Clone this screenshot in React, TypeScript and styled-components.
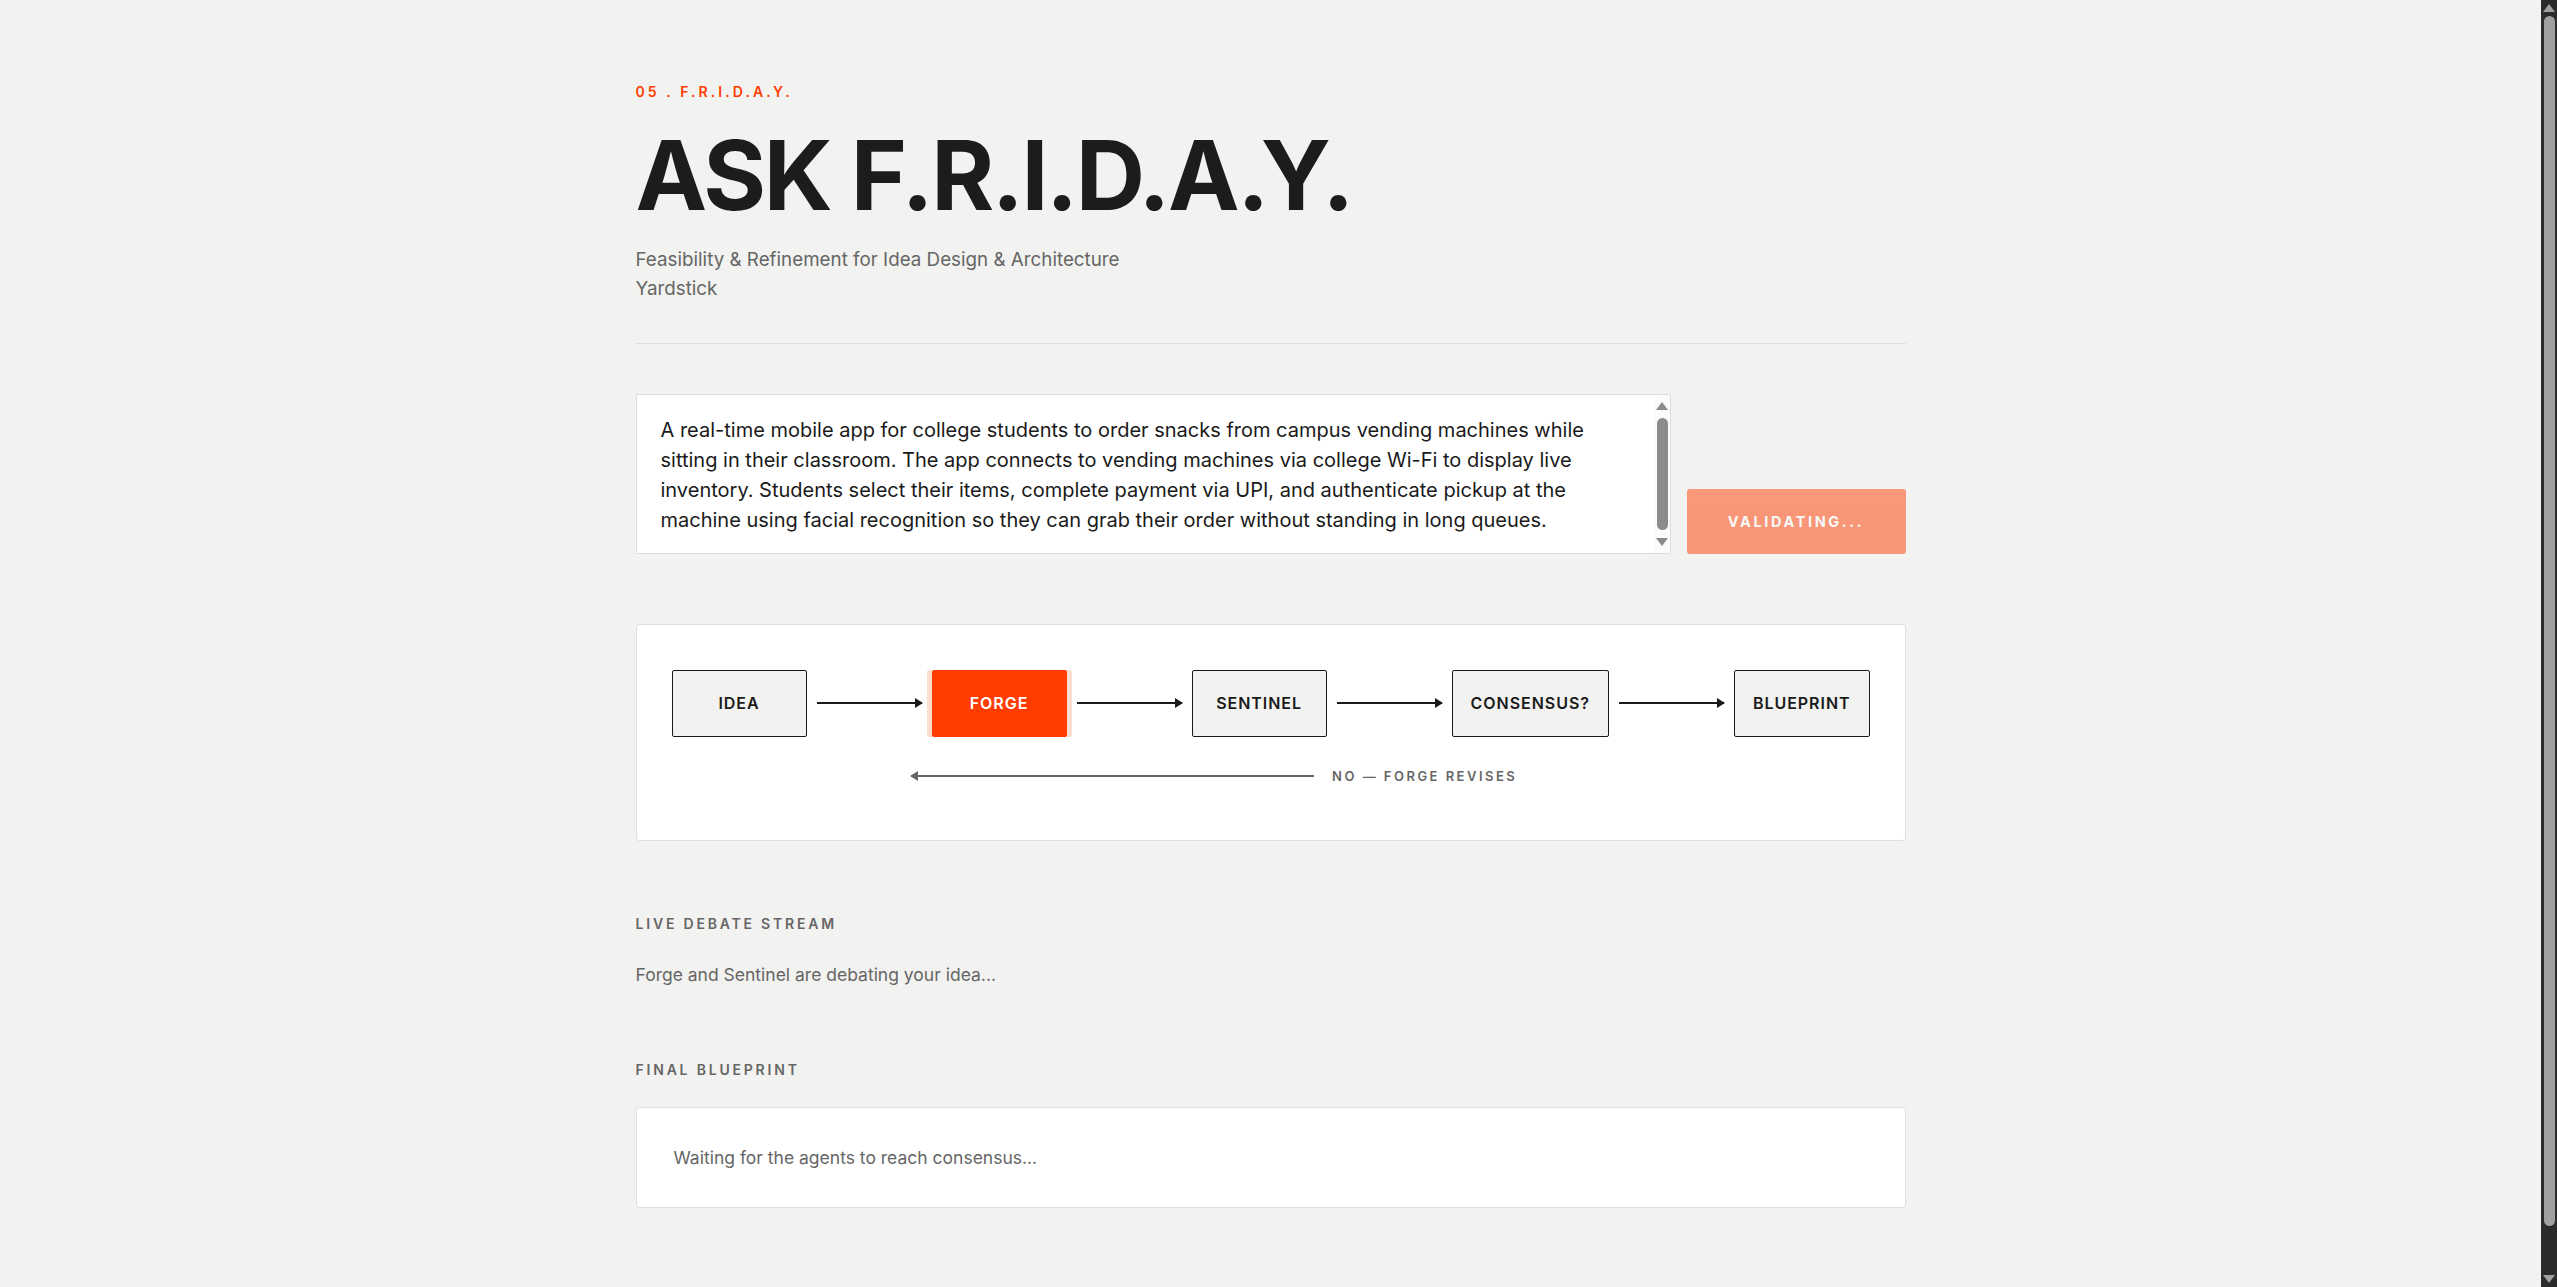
import React from 'react'
import styled, { createGlobalStyle } from 'styled-components'

const GlobalStyle = createGlobalStyle`
    html, body {
        margin: 0;
        padding: 0;
        background: #f2f2f0;
    }

    body {
        padding-right: 16px;
        font-family: Inter, "Noto Sans", "Liberation Sans", sans-serif;
        color: #1a1a1a;
        -webkit-font-smoothing: antialiased;
    }

    * {
        box-sizing: border-box;
    }
`

const Page = styled.main`
    max-width: 1270px;
    margin: 0 auto;
    padding: 83px 0 127px;
`

const Header = styled.header`
    padding-bottom: 39px;
    border-bottom: 1px solid #dddddb;
`

const Eyebrow = styled.div`
    font-size: 14px;
    font-weight: 600;
    line-height: 17px;
    letter-spacing: 0.22em;
    color: #ff3d00;
    margin-bottom: 27px;
`

const Title = styled.h1`
    margin: 0 0 23px;
    font-size: 96px;
    font-weight: 700;
    line-height: 1;
    letter-spacing: -0.025em;
    color: #1c1c1c;
`

const Subtitle = styled.p`
    margin: 0;
    max-width: 540px;
    font-size: 18.8px;
    line-height: 28.8px;
    color: #666;
`

const InputRow = styled.div`
    display: flex;
    align-items: flex-end;
    gap: 16px;
    margin-top: 50px;
`

const InputBox = styled.div`
    flex: 1;
    display: flex;
    position: relative;
`

const IdeaInput = styled.textarea`
    flex: 1;
    height: 160px;
    padding: 20px 39px 44px 24px;
    border: 1px solid #dddddb;
    border-radius: 2px;
    background: #fff;
    font-family: inherit;
    font-size: 20px;
    line-height: 30px;
    color: #1a1a1a;
    resize: none;
    outline: none;
    overflow: hidden;
`

// scrollbars are drawn by hand, the browser hides its own in the screenshot
const TextScrollbar = styled.div`
    position: absolute;
    top: 1px;
    right: 1px;
    bottom: 1px;
    width: 15px;
    display: flex;
    flex-direction: column;
    align-items: center;
    gap: 8px;
    padding: 7px 0;
    background: #fbfbfb;
`

const PageScrollbar = styled.div`
    position: fixed;
    top: 0;
    right: 0;
    bottom: 0;
    width: 16px;
    display: flex;
    flex-direction: column;
    align-items: center;
    gap: 4px;
    padding: 4px 0;
    background: #2b2b2b;
`

interface ThumbProps {
    $color: string
    $length?: number
}

const ScrollThumb = styled.div<ThumbProps>`
    width: 11px;
    border-radius: 6px;
    background: ${ props => props.$color };
    ${ props => props.$length ? `height: ${ props.$length }px;` : 'flex: 1;' }
`

interface ArrowHeadProps {
    $down?: boolean
    $color: string
}

const ScrollArrow = styled.div<ArrowHeadProps>`
    width: 0;
    height: 0;
    flex-shrink: 0;
    border-left: 6px solid transparent;
    border-right: 6px solid transparent;
    ${ props => props.$down
        ? `border-top: 8px solid ${ props.$color }; margin-top: auto;`
        : `border-bottom: 8px solid ${ props.$color };` }
`

const SubmitButton = styled.button`
    width: 219px;
    height: 65px;
    border: none;
    border-radius: 3px;
    background: #ff3d00;
    opacity: 0.5;
    color: #fff;
    font-family: inherit;
    font-size: 14.5px;
    font-weight: 700;
    letter-spacing: 0.18em;
    cursor: not-allowed;
`

const FlowCard = styled.section`
    margin-top: 70px;
    padding: 45px 35px 56px;
    background: #fff;
    border: 1px solid #e0e0de;
    border-radius: 3px;
`

const FlowRow = styled.div`
    display: flex;
    align-items: center;
    gap: 10px;
`

interface NodeProps {
    $active?: boolean
}

const Node = styled.div<NodeProps>`
    display: flex;
    align-items: center;
    justify-content: center;
    height: 67px;
    min-width: 135px;
    padding: 0 18px;
    border: 1px solid ${ props => props.$active ? '#ff3d00' : '#1a1a1a' };
    border-radius: 2px;
    background: ${ props => props.$active ? '#ff3d00' : '#f2f2f0' };
    color: ${ props => props.$active ? '#fff' : '#1a1a1a' };
    box-shadow: ${ props => props.$active ? '-5px 0 0 #ffdcd0, 5px 0 0 #ffdcd0' : 'none' };
    font-size: 16px;
    font-weight: 600;
    letter-spacing: 0.06em;
`

const Arrow = styled.div`
    flex: 1;
    height: 2px;
    background: #1a1a1a;
    position: relative;

    &::after {
        content: '';
        position: absolute;
        right: -1px;
        top: -4px;
        border-left: 8px solid #1a1a1a;
        border-top: 5px solid transparent;
        border-bottom: 5px solid transparent;
    }
`

const ReturnRow = styled.div`
    display: flex;
    align-items: center;
    gap: 18px;
    margin: 31px 0 0 20%;
`

const ReturnArrow = styled.div`
    width: 403px;
    height: 2px;
    background: #666;
    position: relative;

    &::before {
        content: '';
        position: absolute;
        left: -1px;
        top: -4px;
        border-right: 8px solid #666;
        border-top: 5px solid transparent;
        border-bottom: 5px solid transparent;
    }
`

const ReturnLabel = styled.span`
    font-size: 13px;
    font-weight: 600;
    line-height: 16px;
    letter-spacing: 0.19em;
    color: #666;
`

interface SectionProps {
    $gap: number
}

const Section = styled.section<SectionProps>`
    margin-top: ${ props => props.$gap }px;
`

const SectionLabel = styled.h2`
    margin: 0 0 29px;
    font-size: 14px;
    font-weight: 600;
    line-height: 17px;
    letter-spacing: 0.2em;
    color: #666;
`

const StreamText = styled.p`
    margin: 0;
    font-size: 17.5px;
    line-height: 27px;
    color: #666;
`

const BlueprintCard = styled.div`
    padding: 36px 37px;
    background: #fff;
    border: 1px solid #e0e0de;
    border-radius: 3px;
    font-size: 17.5px;
    line-height: 27px;
    color: #666;
`

const idea = 'A real-time mobile app for college students to order snacks from campus vending machines while sitting in their classroom. The app connects to vending machines via college Wi-Fi to display live inventory. Students select their items, complete payment via UPI, and authenticate pickup at the machine using facial recognition so they can grab their order without standing in long queues.'

const steps = [ 'IDEA', 'FORGE', 'SENTINEL', 'CONSENSUS?', 'BLUEPRINT' ]
const activeStep = 'FORGE'

const App: React.FC = () => {
    return (
        <>
            <GlobalStyle />
            <Page>
                <Header>
                    <Eyebrow>05 . F.R.I.D.A.Y.</Eyebrow>
                    <Title>ASK F.R.I.D.A.Y.</Title>
                    <Subtitle>Feasibility &amp; Refinement for Idea Design &amp; Architecture Yardstick</Subtitle>
                </Header>

                <InputRow>
                    <InputBox>
                        <IdeaInput defaultValue={ idea } readOnly />
                        <TextScrollbar aria-hidden>
                            <ScrollArrow $color="#8b8b8b" />
                            <ScrollThumb $color="#8b8b8b" />
                            <ScrollArrow $down $color="#8b8b8b" />
                        </TextScrollbar>
                    </InputBox>
                    <SubmitButton disabled>VALIDATING...</SubmitButton>
                </InputRow>

                <FlowCard>
                    <FlowRow>
                        {
                            steps.map((step, index) =>
                                <React.Fragment key={ step }>
                                    { index > 0 && <Arrow /> }
                                    <Node $active={ step === activeStep }>{ step }</Node>
                                </React.Fragment>
                            )
                        }
                    </FlowRow>
                    <ReturnRow>
                        <ReturnArrow />
                        <ReturnLabel>NO — FORGE REVISES</ReturnLabel>
                    </ReturnRow>
                </FlowCard>

                <Section $gap={ 74 }>
                    <SectionLabel>LIVE DEBATE STREAM</SectionLabel>
                    <StreamText>Forge and Sentinel are debating your idea...</StreamText>
                </Section>

                <Section $gap={ 73 }>
                    <SectionLabel>FINAL BLUEPRINT</SectionLabel>
                    <BlueprintCard>Waiting for the agents to reach consensus...</BlueprintCard>
                </Section>
            </Page>

            <PageScrollbar aria-hidden>
                <ScrollArrow $color="#a0a0a0" />
                <ScrollThumb $color="#a0a0a0" $length={ 1210 } />
                <ScrollArrow $down $color="#a0a0a0" />
            </PageScrollbar>
        </>
    )
}

export default App
